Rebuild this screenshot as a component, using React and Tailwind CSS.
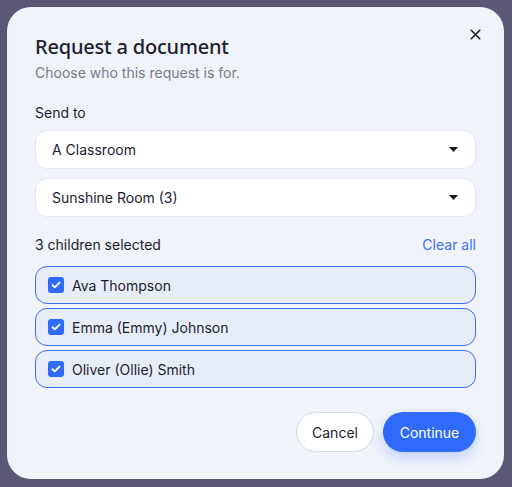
import { X } from 'lucide-react'

const kids = ['Ava Thompson', 'Emma (Emmy) Johnson', 'Oliver (Ollie) Smith']

function Select({ label }) {
  return (
    <div className="h-[39px] flex items-center justify-between bg-white border border-[#e3e6ee] rounded-[12px] pl-4 pr-[17px]">
      <span className="text-[14px] text-[#1c2130]">{label}</span>
      <svg width="9" height="5" viewBox="0 0 9 5"><path d="M0 0h9L4.5 5z" fill="#12151f" /></svg>
    </div>
  )
}

export default function App() {
  return (
    <div className="w-[512px] h-[487px] bg-[#595773] p-[7px] pr-[8px] pb-[8px]" style={{ fontFamily: 'Inter, "Liberation Sans", sans-serif' }}>
      <div className="h-full bg-[#f0f3f9] rounded-[24px] px-[28px] pt-[26px] flex flex-col relative">
        <button className="absolute right-[20px] top-[19px] text-[#161a24]">
          <X size={17} strokeWidth={2.2} />
        </button>

        <h2 className="text-[20px] font-medium text-[#1d2130] leading-[28px] tracking-[-0.01em]" style={{ fontFamily: '"Noto Sans", "Open Sans", sans-serif' }}>Request a document</h2>
        <p className="text-[14px] text-[#767c8f] mt-[2px] leading-[20px]">Choose who this request is for.</p>

        <p className="text-[14px] text-[#1c2130] mt-[20px] leading-[20px]">Send to</p>

        <div className="mt-[7px] flex flex-col gap-[9px]">
          <Select label="A Classroom" />
          <Select label="Sunshine Room (3)" />
        </div>

        <div className="flex items-center justify-between mt-[18px] leading-[20px]">
          <span className="text-[14px] text-[#1c2130]">3 children selected</span>
          <button className="text-[14px] text-[#3a72f2]">Clear all</button>
        </div>

        <div className="mt-[11px] flex flex-col gap-[4px]">
          {kids.map(k => (
            <div key={k} className="h-[38px] flex items-center gap-[8px] bg-[#e7edf8] border border-[#3d6ef0] rounded-[12px] pl-[12px]">
              <div className="w-[16px] h-[16px] rounded-[3px] bg-[#2f6bfa] flex items-center justify-center">
                <svg width="10" height="8" viewBox="0 0 10 8"><path d="M1.5 4.2 3.8 6.3 8.5 1.6" stroke="white" strokeWidth="1.9" fill="none" strokeLinecap="round" strokeLinejoin="round" /></svg>
              </div>
              <span className="text-[14px] text-[#1c2130]">{k}</span>
            </div>
          ))}
        </div>

        <div className="flex justify-end gap-[9px] mt-[24px]">
          <button className="h-[40px] w-[78px] rounded-full bg-white border border-[#d3d9e6] text-[14px] text-[#1c2130]">Cancel</button>
          <button className="h-[40px] w-[93px] rounded-full bg-[#2f6afb] text-[14px] text-white shadow-[0_6px_14px_rgba(47,106,251,0.25)]">Continue</button>
        </div>
      </div>
    </div>
  )
}
